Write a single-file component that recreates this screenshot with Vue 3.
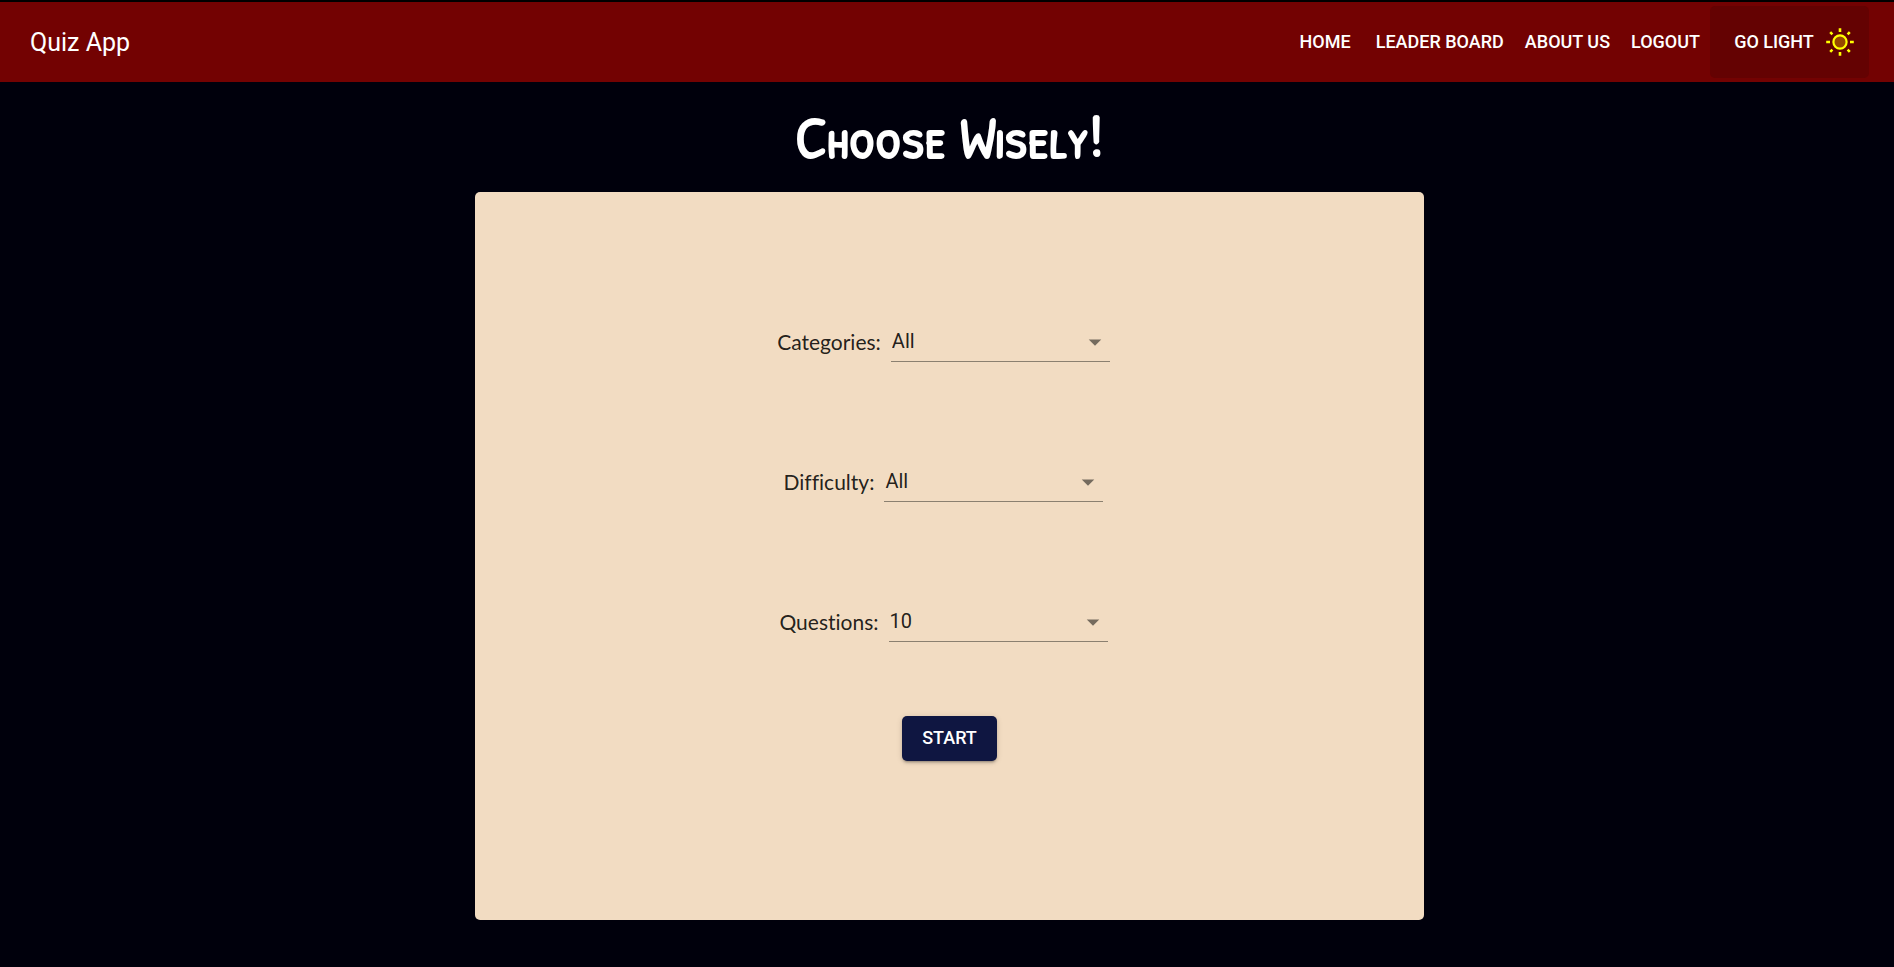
<script setup>
import { reactive } from 'vue'

const links = ['Home', 'Leader Board', 'About Us', 'Logout']

const fields = reactive([
  { id: 'categories', label: 'Categories:', value: 'All', options: ['All'] },
  { id: 'difficulty', label: 'Difficulty:', value: 'All', options: ['All', 'Easy', 'Medium', 'Hard'] },
  { id: 'questions', label: 'Questions:', value: '10', options: ['10', '20', '30'] },
])
</script>

<template>
  <div class="page">
    <header class="bar">
      <a class="brand" href="#">Quiz App</a>
      <nav class="nav">
        <a v-for="link in links" :key="link" class="link" href="#">{{ link }}</a>
      </nav>
      <button class="theme" type="button">
        Go Light
        <svg class="sun" viewBox="0 0 30 30" aria-hidden="true">
          <circle cx="15" cy="15" r="6.6" fill="#964800" stroke="#ff0" stroke-width="2.2" />
          <path
            d="M15 1.2v3.8M15 25v3.8M1.2 15h3.8M25 15h3.8M5.2 5.2l2.2 2.2M22.6 22.6l2.2 2.2M5.2 24.8l2.2-2.2M22.6 7.4l2.2-2.2"
            stroke="#ff0"
            stroke-width="2.6"
          />
        </svg>
      </button>
    </header>

    <main class="main">
      <h1 class="title">Choose Wisely!</h1>
      <form class="card" @submit.prevent>
        <div v-for="field in fields" :key="field.id" class="field">
          <label class="label" :for="field.id">{{ field.label }}</label>
          <div class="control">
            <select :id="field.id" v-model="field.value" class="select">
              <option v-for="option in field.options" :key="option">{{ option }}</option>
            </select>
            <svg class="arrow" viewBox="0 0 30 30" aria-hidden="true">
              <path d="M8.75 12.5 15 18.75 21.25 12.5z" />
            </svg>
          </div>
        </div>
        <button class="start" type="submit">Start</button>
      </form>
    </main>
  </div>
</template>

<style>
body {
  background: #00000c;
}
</style>

<style scoped>
.page {
  box-sizing: border-box;
  min-height: 100vh;
  background: #00000c;
  color: #fff;
  font-family: Roboto, 'Liberation Sans', sans-serif;
}

.bar {
  display: flex;
  align-items: center;
  height: 80px;
  padding: 0 25px 0 30px;
  border-top: 2px solid #000;
  background: #730202;
}

.brand {
  margin-right: auto;
  padding-top: 2px;
  color: #fff;
  font-size: 25px;
  line-height: 40px;
  text-decoration: none;
}

.nav {
  display: flex;
  gap: 21px;
  margin-right: 10px;
}

.link {
  color: #fff;
  font-size: 18px;
  font-weight: 500;
  line-height: 32px;
  text-decoration: none;
  text-transform: uppercase;
}

.link:first-child {
  margin-right: 4px;
}

.theme {
  display: flex;
  align-items: center;
  justify-content: center;
  gap: 11px;
  box-sizing: border-box;
  width: 159px;
  height: 72px;
  padding: 0 14px 0 24px;
  border: 0;
  border-radius: 5px;
  background: #640202;
  color: #fff;
  font: 500 18px/32px Roboto, 'Liberation Sans', sans-serif;
  text-transform: uppercase;
  white-space: nowrap;
}

.sun {
  flex: none;
  width: 30px;
  height: 30px;
}

.main {
  display: flex;
  flex-direction: column;
  align-items: center;
  padding: 15px 0 47px 5px;
}

.title {
  margin: 0 0 15px;
  font: 700 58px/80px 'Patrick Hand SC', Lato, sans-serif;
  font-variant: small-caps;
  white-space: nowrap;
}

.card {
  display: flex;
  flex-direction: column;
  align-items: center;
  gap: 100px;
  box-sizing: border-box;
  width: calc(50% + 5px);
  min-height: 728px;
  padding: 130px 20px 20px;
  border-radius: 5px;
  background: #f2dcc2;
  color: rgba(0, 0, 0, 0.87);
}

.field {
  display: flex;
  align-items: center;
  gap: 10px;
  margin-right: 12px;
}

.label {
  font-family: Lato, 'Open Sans', sans-serif;
  font-size: 21px;
  line-height: 24px;
  font-variant-ligatures: none;
}

.control {
  position: relative;
  width: 219px;
}

.select {
  display: block;
  box-sizing: border-box;
  width: 100%;
  height: 40px;
  padding: 0 30px 2px 1px;
  border: 0;
  border-bottom: 1px solid #8b8070;
  border-radius: 0;
  appearance: none;
  background: transparent;
  color: inherit;
  font: 400 20px/24px Roboto, 'Liberation Sans', sans-serif;
}

.arrow {
  position: absolute;
  top: 5px;
  right: 0;
  width: 30px;
  height: 30px;
  fill: #756b5e;
  pointer-events: none;
}

.start {
  margin-top: -26px;
  padding: 7px 20px 8px;
  border: 0;
  border-radius: 5px;
  background: #0f1641;
  box-shadow: 0 3px 2px -2px rgba(0, 0, 0, 0.2), 0 2px 3px rgba(0, 0, 0, 0.14), 0 1px 6px rgba(0, 0, 0, 0.12);
  color: #fff;
  font: 500 18px/30px Roboto, 'Liberation Sans', sans-serif;
  text-transform: uppercase;
}
</style>
